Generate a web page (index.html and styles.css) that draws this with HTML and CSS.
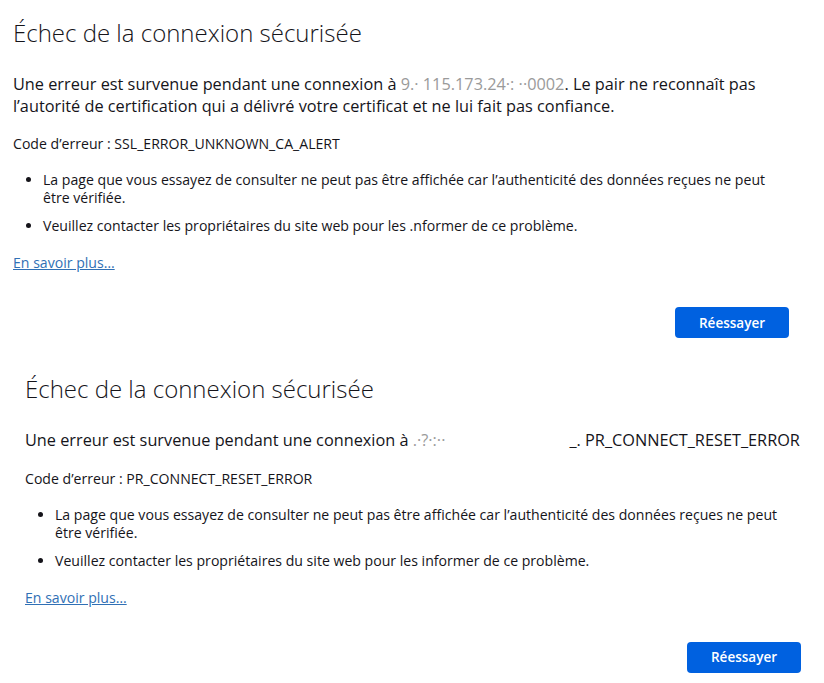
FILE: index.html
```html
<!DOCTYPE html>
<html lang="fr">
<head>
<meta charset="utf-8">
<title>Échec de la connexion sécurisée</title>
<link rel="stylesheet" href="styles.css">
</head>
<body>
<section class="err err-1">
  <h1 class="title">Échec de la connexion sécurisée</h1>
  <p class="desc">Une erreur est survenue pendant une connexion à <span class="redact">9.· 115.173.24·: ··0002</span>. Le pair ne reconnaît pas l’autorité de certification qui a délivré votre certificat et ne lui fait pas confiance.</p>
  <p class="code">Code d’erreur : SSL_ERROR_UNKNOWN_CA_ALERT</p>
  <ul class="list">
    <li>La page que vous essayez de consulter ne peut pas être affichée car l’authenticité des données reçues ne peut être vérifiée.</li>
    <li>Veuillez contacter les propriétaires du site web pour les .nformer de ce problème.</li>
  </ul>
  <a class="more" href="#">En savoir plus…</a>
  <div class="actions"><button class="retry">Réessayer</button></div>
</section>
<section class="err err-2">
  <h1 class="title">Échec de la connexion sécurisée</h1>
  <p class="desc nowrap">Une erreur est survenue pendant une connexion à <span class="redact">.·?·:··</span><span class="gapfill"></span>_. PR_CONNECT_RESET_ERROR</p>
  <p class="code">Code d’erreur : PR_CONNECT_RESET_ERROR</p>
  <ul class="list">
    <li>La page que vous essayez de consulter ne peut pas être affichée car l’authenticité des données reçues ne peut être vérifiée.</li>
    <li>Veuillez contacter les propriétaires du site web pour les informer de ce problème.</li>
  </ul>
  <a class="more" href="#">En savoir plus…</a>
  <div class="actions"><button class="retry">Réessayer</button></div>
</section>
</body>
</html>
```
FILE: styles.css
```css
html, body {
  margin: 0;
  padding: 0;
  background: #ffffff;
}
body {
  font-family: "Open Sans", "Noto Sans", sans-serif;
  color: #15141a;
  width: 824px;
  height: 683px;
  overflow: hidden;
}
.err {
  width: 776px;
  display: flex;
  flex-direction: column;
}
.err-1 {
  margin-left: 13px;
  padding-top: 17px;
}
.err-2 {
  margin-left: 25px;
  padding-top: 35px;
}
.title {
  margin: 0;
  font-size: 24px;
  font-weight: 300;
  line-height: 32px;
}
.desc {
  margin: 25px 0 0;
  font-size: 16.3px;
  line-height: 21.5px;
}
.nowrap {
  white-space: nowrap;
}
.redact {
  color: #9a9a9a;
}
.gapfill {
  display: inline-block;
  width: 124px;
}
.code {
  margin: 17px 0 0;
  font-size: 14.1px;
  line-height: 20px;
}
.list {
  margin: 17px 0 0;
  padding-left: 30px;
  font-size: 14.1px;
  line-height: 18px;
}
.list li + li {
  margin-top: 10px;
}
.more {
  margin-top: 18px;
  align-self: flex-start;
  font-size: 14.1px;
  line-height: 20px;
  color: #3070b5;
}
.actions {
  display: flex;
  justify-content: flex-end;
  margin-top: 34px;
}
.retry {
  width: 114px;
  height: 31px;
  border: none;
  border-radius: 4px;
  background: #0061e0;
  color: #fff;
  font-family: inherit;
  font-size: 13.5px;
  font-weight: 600;
  padding: 0;
}
```
